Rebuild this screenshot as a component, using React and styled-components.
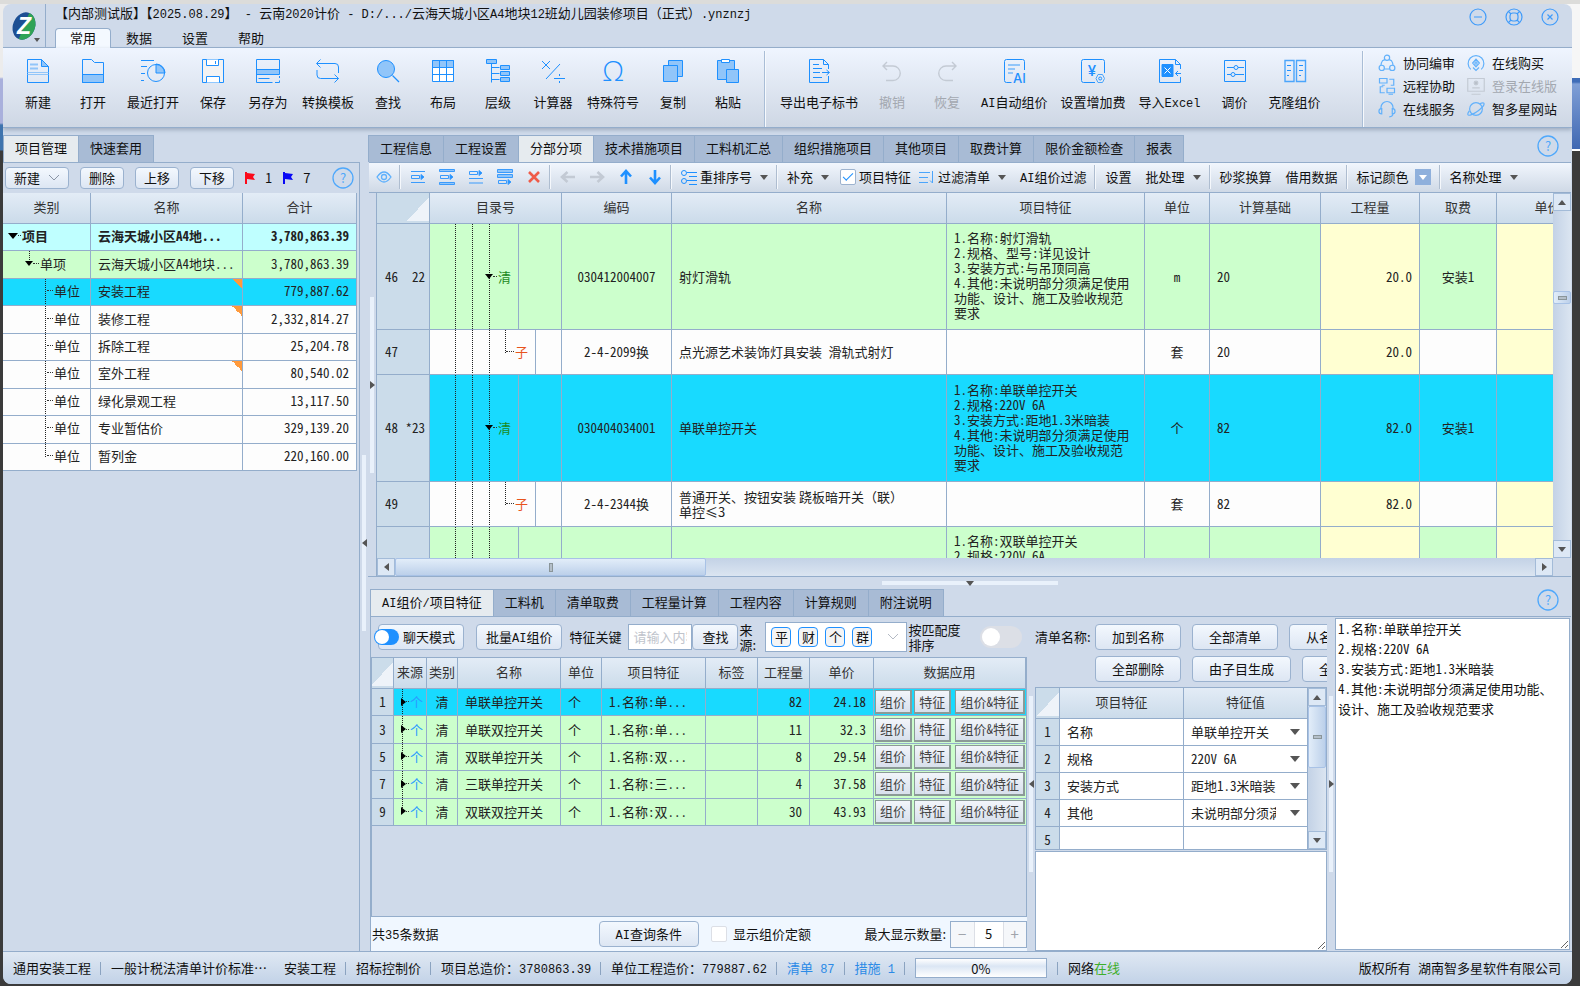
import { useState } from 'react';
import styled, { createGlobalStyle, css } from 'styled-components';

const line = '#94adcb';
const blue = '#1e90ff';
const pale = '#91c5f9';

const GlobalStyle = createGlobalStyle`
  *, *::before, *::after {
    box-sizing: border-box;
  }
  body {
    margin: 0;
    font-family: 'Noto Sans CJK SC', sans-serif;
    font-size: 13px;
    line-height: 20px;
    color: #111;
  }
  button, input, select, textarea {
    font: inherit;
    color: inherit;
    margin: 0;
  }
  button {
    cursor: pointer;
  }
  svg {
    flex: none;
    overflow: visible;
  }
`;

const Latin = styled.span`
  font-family: 'Liberation Mono', monospace;
  font-size: 12px;
  line-height: 1;
  white-space: pre;
`;

const mixed = (text) =>
  text.split(/([\x20-\x7e]+)/).map((part, i) => (i % 2 ? <Latin key={i}>{part}</Latin> : part));

const Desktop = styled.div`
  height: 100vh;
  padding: 4px 8px 2px 3px;
  background:
    linear-gradient(#dcdcda, #dcdcda) 0 0 / 100% 4px no-repeat,
    linear-gradient(#f6f6f6 0 78px, #3f6db8 78px 82px, #7f9fd6 84px, #4068b2 149px, #fff 149px 151px, #3b3b3b 151px) 100% 0 / 20px 100% no-repeat,
    linear-gradient(#ececec 0 77px, #a9b0dc 79px 123px, #3f74ae 125px 150px, #3b3b3b 151px);
`;

const Window = styled.div`
  display: flex;
  flex-direction: column;
  height: 100%;
  overflow: hidden;
  background: #cfdaea;
  border-radius: 8px;
`;

/* title bar */

const TitleBar = styled.header`
  display: flex;
  flex: none;
  height: 44px;
  border-bottom: 1px solid ${line};
`;

const LogoButton = styled.button`
  display: flex;
  align-items: flex-end;
  width: 43px;
  padding: 0 0 4px 8px;
  background: none;
  border: 0;
  border-right: 1px solid ${line};
`;

const TitleColumn = styled.div`
  display: flex;
  flex: 1;
  flex-direction: column;
  justify-content: space-between;
  padding-left: 9px;
`;

const Title = styled.h1`
  margin: 0;
  font-size: 13px;
  font-weight: 400;
  line-height: 18px;
  white-space: pre;
`;

const Menu = styled.nav`
  display: flex;
  margin-bottom: -1px;
`;

const MenuTab = styled.button`
  height: 20px;
  width: 56px;
  padding: 0;
  line-height: 16px;
  border: 1px solid transparent;
  border-bottom: 0;
  border-radius: 4px 4px 0 0;
  background: none;
  padding-bottom: 2px;
  ${({ $active }) =>
    $active &&
    css`
      background: #f4f9ff;
      border-color: ${line};
    `}
`;

const WindowButtons = styled.div`
  display: flex;
  gap: 18px;
  padding: 3px 13px 0 0;
`;

const RoundButton = styled.button`
  display: flex;
  height: 20px;
  width: 18px;
  padding: 0;
  align-items: center;
  background: none;
  border: 0;
`;

/* ribbon */

const Ribbon = styled.div`
  display: flex;
  flex: none;
  height: 80px;
  padding-left: 8px;
  background: linear-gradient(#eff5ff, #e2e9f4 40%, #ced7e4);
  border-bottom: 1px solid ${line};
  box-shadow: 0 2px 4px #9fadc0;
`;

const RibbonButton = styled.button`
  display: flex;
  flex-direction: column;
  align-items: center;
  gap: 9px;
  min-width: 54px;
  margin-right: 1px;
  padding: 11px 6px 0;
  background: none;
  border: 0;
  white-space: nowrap;
  &:disabled {
    color: #a3a8b0;
  }
`;

const RibbonLine = styled.span`
  width: 2px;
  margin: 3px 8px 0;
  background: linear-gradient(90deg, #a9bdd6 50%, #f6f9fd 50%);
`;

const Spacer = styled.span`
  flex: ${({ $grow }) => $grow || 1};
`;

const Links = styled.div`
  display: grid;
  grid-template-columns: auto auto;
  grid-auto-rows: 23px;
  column-gap: 12px;
  padding: 3px 15px 0 6px;
`;

const SideLink = styled.a`
  display: flex;
  align-items: center;
  gap: 7px;
  color: ${({ $off }) => ($off ? '#a3a8b0' : '#111')};
  text-decoration: none;
  white-space: nowrap;
`;

/* panes */

const Body = styled.div`
  display: flex;
  flex: 1;
  min-height: 0;
  padding-top: 7px;
`;

const Sidebar = styled.aside`
  display: flex;
  flex-direction: column;
  flex: none;
  width: 357px;
`;

const SidePanel = styled.div`
  flex: 1;
  padding-right: 2px;
  border: 1px solid ${line};
  border-left: 0;
  border-bottom: 0;
`;

const TabRow = styled.div`
  display: flex;
  flex: none;
  height: 27px;
  padding-right: ${({ $inset }) => ($inset ? 12 : 0)}px;
`;

const Tab = styled.button`
  padding: 0 11px 2px;
  border: 1px solid ${line};
  border-width: 1px 1px 0 0;
  background: ${({ $active }) => ($active ? '#e6ebef' : '#a8bbd5')};
  white-space: nowrap;
  &:first-child {
    border-left-width: 1px;
  }
`;

const HelpButton = styled(RoundButton)`
  width: 22px;
  height: 22px;
  margin-left: auto;
`;

const SideTools = styled.div`
  display: flex;
  align-items: center;
  height: 30px;
  padding: 0 3px 0 2px;
  gap: 11px;
`;

const PushButton = styled.button`
  display: inline-flex;
  align-items: center;
  justify-content: center;
  gap: 8px;
  flex: none;
  height: ${({ $tall }) => ($tall ? 26 : 22)}px;
  padding: 0 ${({ $pad }) => $pad || 8}px;
  line-height: 18px;
  background: linear-gradient(#f3f8fe, #dde6f3);
  border: 1px solid #9bb2cf;
  border-radius: 4px;
  white-space: nowrap;
`;

const Flag = styled.span`
  display: flex;
  align-items: center;
  gap: 10px;
`;

const Splitter = styled.div`
  display: flex;
  flex: none;
  align-items: center;
  justify-content: center;
  ${({ $row }) => ($row ? 'height: 12px;' : 'width: 8px;')}
`;

const SplitterBar = styled.span`
  display: flex;
  align-items: center;
  justify-content: center;
  background: #e9f1fb;
  ${({ $row }) => ($row ? 'width: 176px; height: 4px;' : 'width: 4px; height: 176px;')}
`;

const Arrow = styled.span`
  flex: none;
  width: 0;
  height: 0;
  border: ${({ $size }) => $size || 4}px solid transparent;
  ${({ $dir, $size, $color }) => {
    const size = ($size || 4) + 1;
    const fill = $color || '#555';
    return {
      up: `border-top: 0; border-bottom: ${size}px solid ${fill};`,
      down: `border-bottom: 0; border-top: ${size}px solid ${fill};`,
      left: `border-left: 0; border-right: ${size}px solid ${fill};`,
      right: `border-right: 0; border-left: ${size}px solid ${fill};`,
    }[$dir || 'down'];
  }}
`;

const Main = styled.main`
  display: flex;
  flex: 1;
  flex-direction: column;
  min-width: 0;
  padding-right: 1px;
`;

/* grids */

const DataTable = styled.table`
  table-layout: fixed;
  width: ${({ $width }) => ($width ? `${$width}px` : '100%')};
  border-collapse: separate;
  border-spacing: 0;
  font-feature-settings: 'hwid';
  color: #222;
`;

const Th = styled.th`
  height: ${({ $height }) => $height || 31}px;
  padding: 0 0 2px;
  font-weight: 400;
  color: #333;
  background: linear-gradient(#e3ecf6, #cbdbea);
  border-right: 1px solid ${line};
  border-bottom: 1px solid ${line};
  white-space: nowrap;
  overflow: hidden;
`;

const Corner = styled(Th)`
  background: linear-gradient(to bottom right, transparent 50%, #eef3f9 50%) 100% 4px / 22px 24px no-repeat, #cbdcea;
`;

const Td = styled.td`
  height: ${({ $height }) => ($height ? `${$height}px` : 'auto')};
  padding: 0 ${({ $pad }) => $pad ?? 7}px 1px;
  text-align: ${({ $align }) => $align || 'left'};
  line-height: 15px;
  background-color: ${({ $bg }) => $bg || 'transparent'};
  border-right: 1px solid ${line};
  border-bottom: 1px solid ${line};
  overflow: hidden;
  white-space: ${({ $wrap }) => ($wrap ? 'pre-line' : 'nowrap')};
`;

const SpecTd = styled(Td)`
  padding-right: 12px;
  padding-bottom: 3px;
`;

const QuotaNameTd = styled(Td)`
  font-feature-settings: ${({ $full }) => ($full ? 'normal' : 'inherit')};
`;

const RowHead = styled(Td)`
  background-color: #cbdcea;
`;

const RowNumbers = styled.div`
  display: flex;
  justify-content: space-between;
  padding-left: 4px;
`;

const ProjectTable = styled(DataTable)`
  height: 278px;
  td {
    padding-bottom: 3px;
  }
  tbody tr:first-child {
    font-weight: 700;
  }
`;

const NameTd = styled(Td)`
  ${({ $marked }) =>
    $marked &&
    css`
      background-image: linear-gradient(to bottom left, #ff9a3c 50%, transparent 50%);
      background-size: 10px 10px;
      background-position: 100% 0;
      background-repeat: no-repeat;
    `}
`;

const dots = 'repeating-linear-gradient(#222 0 1px, transparent 1px 2px)';

const TreeTd = styled(Td)`
  background-repeat: no-repeat;
  background-image: ${({ $guides }) => $guides.map(() => dots).join(', ') || 'none'};
  background-position: ${({ $guides }) => $guides.map((g) => `${g.x}px 0`).join(', ') || '0 0'};
  background-size: ${({ $guides }) => $guides.map((g) => `1px ${g.h || '100%'}`).join(', ') || 'auto'};
`;

const TreeItem = styled.span`
  display: flex;
  align-items: center;
  padding-left: ${({ $indent }) => $indent}px;
  color: ${({ $color }) => $color || 'inherit'};
`;

const Dash = styled.i`
  width: ${({ $width }) => $width || 6}px;
  margin-right: 1px;
  border-top: 1px dotted #333;
`;

const InnerLine = styled.span`
  position: absolute;
  top: 0;
  bottom: 0;
  left: ${({ $left }) => $left}px;
  border-left: 1px solid ${line};
`;

const DirTd = styled(TreeTd)`
  position: relative;
`;

/* quota grid */

const Toolbar = styled.div`
  display: flex;
  flex: none;
  align-items: center;
  height: 31px;
  margin-left: 1px;
  padding-bottom: 1px;
  background: linear-gradient(#f1f6fd, #cfd9e6);
  border-top: 1px solid ${line};
  border-bottom: 1px solid ${line};
`;

const IconButton = styled.button`
  display: flex;
  align-items: center;
  justify-content: center;
  width: 29px;
  height: 28px;
  padding: 0;
  background: none;
  border: 0;
`;

const ToolButton = styled.button`
  display: flex;
  align-items: center;
  padding: 0 7px;
  background: none;
  border: 0;
  white-space: nowrap;
  svg {
    margin-right: 3px;
  }
`;

const Caret = styled(Arrow)`
  margin-left: 8px;
`;

const ToolCheck = styled.label`
  display: flex;
  align-items: center;
  gap: 3px;
  padding: 0 1px 0 4px;
  white-space: nowrap;
`;

const CheckBox = styled.input`
  appearance: none;
  width: 16px;
  height: 16px;
  background: #fff;
  border: 1px solid ${({ $soft }) => ($soft ? '#dcdfe6' : '#9db3cf')};
  border-radius: 2px;
  &:checked::after {
    content: '';
    display: block;
    width: 10px;
    height: 5px;
    margin: 3px 0 0 2px;
    border: solid ${blue};
    border-width: 0 0 1px 1px;
    transform: rotate(-45deg);
  }
`;

const ToolLine = styled.span`
  width: 2px;
  height: 24px;
  margin: 0 2px 0 1px;
  background: linear-gradient(90deg, #aebdd0 50%, #f5f8fc 50%);
`;

const ColorSwatch = styled.span`
  display: flex;
  align-items: center;
  justify-content: center;
  width: 16px;
  height: 16px;
  margin-left: 6px;
  background: #8fb0dc;
`;

const GridFrame = styled.div`
  display: flex;
  flex: 1;
  min-height: 0;
  border-bottom: 1px solid ${line};
`;

const GridColumn = styled.div`
  display: flex;
  flex: 1;
  flex-direction: column;
  min-width: 0;
  border-left: 1px solid ${line};
`;

const GridClip = styled.div`
  flex: 1;
  min-height: 0;
  overflow: hidden;
`;

const HTrack = styled.div`
  display: flex;
  flex: none;
  height: 18px;
  background: linear-gradient(#c3d2e6, #dbe5f1);
`;

const VTrack = styled.div`
  display: flex;
  flex: none;
  flex-direction: column;
  width: 18px;
  margin-bottom: ${({ $corner }) => ($corner ? 18 : 0)}px;
  background: linear-gradient(90deg, #c3d2e6, #dbe5f1);
`;

const ScrollButton = styled.button`
  display: flex;
  align-items: center;
  justify-content: center;
  flex: none;
  width: 18px;
  height: 18px;
  padding: 0;
  background: #dde8f5;
  border: 1px solid #a3bbd8;
`;

const Thumb = styled.div`
  display: flex;
  flex: none;
  align-items: center;
  justify-content: center;
  flex-basis: ${({ $length }) => $length}px;
  margin-top: ${({ $offset }) => $offset || 0}px;
  background: linear-gradient(${({ $flat }) => ($flat ? '' : '90deg, ')}#e2edf9, #bcd0ea);
  border: 1px solid #a8c2e6;
  border-radius: 2px;
`;

const Grip = styled.span`
  ${({ $tall }) => ($tall ? 'width: 4px; height: 9px;' : 'width: 9px; height: 4px;')}
  background: #b4bfc9;
  border: 1px solid #8a9599;
`;

/* lower pane */

const Lower = styled.section`
  display: flex;
  flex-direction: column;
  flex: none;
  height: 362px;
  padding-left: 2px;
`;

const LowerBody = styled.div`
  display: flex;
  flex: 1;
  min-height: 0;
  border: 1px solid ${line};
  border-width: 1px 0 0 1px;
`;

const AiPanel = styled.div`
  display: flex;
  flex: 1;
  flex-direction: column;
  min-width: 0;
`;

const AiTools = styled.div`
  display: flex;
  align-items: center;
  flex: none;
  height: 40px;
  padding: 0 5px 1px 7px;
  line-height: 15px;
`;

const SwitchButton = styled.label`
  display: flex;
  flex: none;
  align-items: center;
  gap: 4px;
  width: 86px;
  height: 26px;
  margin-right: 12px;
  background: linear-gradient(#f3f8fe, #dde6f3);
  border: 1px solid #9bb2cf;
  border-radius: 4px;
  white-space: nowrap;
`;

const Switch = styled.input`
  appearance: none;
  flex: none;
  display: flex;
  width: ${({ $large }) => ($large ? 42 : 25)}px;
  height: ${({ $large }) => ($large ? 22 : 16)}px;
  margin-left: ${({ $large }) => ($large ? 0 : -5)}px;
  background: ${({ $large }) => ($large ? '#dcdfe6' : blue)};
  border-radius: 11px;
  &::before {
    content: '';
    width: ${({ $large }) => ($large ? 18 : 14)}px;
    height: ${({ $large }) => ($large ? 18 : 14)}px;
    margin: ${({ $large }) => ($large ? 2 : 1)}px;
    background: #fff;
    border-radius: 50%;
  }
`;

const FieldLabel = styled.label`
  flex: none;
  width: ${({ $width }) => $width}px;
  margin-left: ${({ $gap }) => $gap || 0}px;
  white-space: ${({ $wrap }) => ($wrap ? 'normal' : 'nowrap')};
`;

const KeyInput = styled.input`
  flex: none;
  width: 64px;
  height: 26px;
  padding: 0 4px;
  background: #fff;
  border: 1px solid ${line};
  &::placeholder {
    color: #c0c4cc;
  }
`;

const SourcePicker = styled.button`
  display: flex;
  flex: none;
  align-items: center;
  gap: 7px;
  width: 142px;
  height: 30px;
  padding: 0 5px;
  background: #fff;
  border: 1px solid ${line};
  svg {
    margin: 0 2px 0 auto;
  }
`;

const SourceTag = styled.span`
  width: 20px;
  height: 20px;
  line-height: 17px;
  background: #f4f4f5;
  border: 1px solid ${blue};
  border-radius: 4px;
`;

const AiGrid = styled.div`
  flex: 1;
  min-height: 0;
  border: 1px solid ${line};
`;

const AiTable = styled(DataTable)`
  height: 168px;
`;

const ActionTd = styled(Td)`
  padding: 0 1px;
  border-right: 0;
`;

const Actions = styled.div`
  display: flex;
  gap: 2px;
`;

const CellButton = styled.button`
  flex: 1 1 auto;
  height: 24px;
  padding: 0 4px;
  line-height: 18px;
  color: #444;
  background: linear-gradient(#f2f5fa, #d8e0ec);
  border: 1px solid #8b9a97;
  border-bottom-width: 2px;
  border-right-width: 2px;
  &:last-child {
    margin-left: 2px;
  }
`;

const AiFooter = styled.div`
  display: flex;
  flex: none;
  align-items: center;
  height: 34px;
  padding-left: 1px;
  background: #f0f7ff;
`;

const FootCheck = styled.label`
  display: flex;
  align-items: center;
  gap: 6px;
  margin-left: 12px;
`;

const Stepper = styled.div`
  display: flex;
  width: 77px;
  height: 27px;
  margin-left: 4px;
  background: #fff;
  border: 1px solid ${line};
`;

const StepButton = styled.button`
  width: 23px;
  padding: 0;
  color: #a0a4ab;
  font-size: 15px;
  background: #f5f7fa;
  border: 0;
`;

const StepInput = styled.input`
  flex: 1;
  width: 30px;
  padding: 0;
  text-align: center;
  background: #fff;
  border: solid #dcdfe6;
  border-width: 0 1px;
`;

const FeaturePanel = styled.div`
  display: flex;
  flex: none;
  flex-direction: column;
  width: 292px;
  overflow: hidden;
`;

const ButtonGrid = styled.div`
  display: flex;
  flex: none;
  align-items: center;
  gap: 11px;
  height: 32px;
  margin-top: ${({ $first }) => ($first ? 4 : 0)}px;
  padding-left: ${({ $first }) => ($first ? 0 : 60)}px;
`;

const GroupLabel = styled.span`
  flex: none;
  width: 49px;
  white-space: nowrap;
`;

const FeatureFrame = styled.div`
  display: flex;
  flex: none;
  height: 163px;
  margin-top: 2px;
  overflow: hidden;
  background: #fff;
  border: 1px solid ${line};
`;

const SelectBox = styled.span`
  display: flex;
  align-items: center;
  padding: 0 7px;
`;

const ValueSelect = styled.select`
  appearance: none;
  flex: 1;
  min-width: 0;
  padding: 0;
  margin-right: 14px;
  background: none;
  border: 0;
  font-feature-settings: 'hwid';
`;

const Note = styled.textarea`
  display: block;
  flex: 1;
  min-height: 0;
  margin-top: 1px;
  padding: 0 12px 0 2px;
  line-height: 20px;
  background: #fff;
  border: 1px solid ${line};
  font-feature-settings: 'hwid';
`;

const NoteColumn = styled.div`
  display: flex;
  flex: none;
  width: 235px;
  margin: 0 1px 1px 0;
`;

/* status bar */

const StatusBar = styled.footer`
  display: flex;
  flex: none;
  align-items: center;
  height: 33px;
  padding: 0 11px 0 10px;
  background: linear-gradient(#dfe8f3, #c2d2e7);
  border-top: 1px solid ${line};
  white-space: pre;
`;

const Stat = styled.span`
  padding-right: ${({ $end }) => ($end ? 17 : 9)}px;
  color: ${({ $link }) => ($link ? '#2b8ae6' : 'inherit')};
`;

const StatLine = styled.i`
  width: 1px;
  height: 13px;
  margin-right: 10px;
  background: #8ba3c0;
`;

const Progress = styled.div`
  width: 132px;
  height: 20px;
  margin-right: 10px;
  text-align: center;
  line-height: 20px;
  background: linear-gradient(#fff, #dbe6f4 40%, #fff);
  border: 1px solid ${line};
`;

const Online = styled.span`
  color: #3fae2a;
`;

/* icons */

const Svg = ({ size = 24, stroke = blue, children, ...rest }) => (
  <svg width={size} height={size} viewBox="0 0 24 24" fill="none" stroke={stroke} aria-hidden="true" {...rest}>
    {children}
  </svg>
);

const icons = {
  new: (
    <>
      <path d="M1.5.5h14l7 7v16h-21z" />
      <path d="M15.5.5v7h7z" fill={pale} />
      <path d="M4 5.500h8M4 9.500h8" stroke={pale} strokeWidth="2" />
      <path d="M1.500 13.500h21M1.500 15.500h21" stroke={pale} />
    </>
  ),
  open: (
    <>
      <path d="M1.500 15.500h21v8h-21z" fill={pale} />
      <path d="M1.500 23.500V.5h9l3 3h9v20z" />
    </>
  ),
  recent: (
    <>
      <path d="M0 1.500h13M0 7.500h6M0 14.500h4M0 21.500h3" />
      <path d="M15 14V5a9 9 0 0 1 9 9z" fill={pale} />
      <circle cx="15" cy="14" r="8.500" />
    </>
  ),
  save: (
    <>
      <path d="M1.500.5h21v23h-21z" fill="#f3f3f3" />
      <path d="M5.500.5v6h12v-6M5.500 23.500v-6h13v6" fill="#fff" />
      <path d="M14.500 2v3" />
    </>
  ),
  saveAs: (
    <>
      <path d="M.5 11h23v4.500h-23z" fill={pale} stroke="none" />
      <path d="M.5 23.500V.5h23v15H.5M.5 10.500h23M2.500 19.500h11M.5 23.500h16M23.500 17v2M19 23.500h4.500v-2" />
    </>
  ),
  swap: (
    <>
      <path d="M1 4.500h18q3.500 0 3.500 3.500v6" />
      <path d="M4.500.5l-4 4 4 4M1 11v5q0 3.500 3.500 3.500h18M18.500 15.500l4 4-4 4" />
    </>
  ),
  search: (
    <>
      <circle cx="10" cy="10" r="8.500" fill={pale} />
      <path d="M16.500 16.500l6.500 6.500" strokeWidth="1.300" />
    </>
  ),
  grid: (
    <>
      <path d="M1.500 1.500h21v21h-21z" fill="#fff" />
      <path d="M1.500 1.500h21v7h-21z" fill={pale} />
      <path d="M1.500 15.500h21M8.500 1.500v21M15.500 1.500v21" />
    </>
  ),
  levels: (
    <>
      <path d="M5.500 4v19.500M5.500 8.500h8M5.500 14.500h8M5.500 20.500h8" />
      <path d="M.5.5h10v4H.5zM14.500 6.500h9v4h-9zM14.500 12.500h9v4h-9zM14.500 18.500h9v4h-9z" fill={pale} />
    </>
  ),
  calc: <path d="M1 2l8 8M9 2l-8 8M5 20L19 5M13 19.500h11M18.500 15v2M18.500 22v2" />,
  omega: (
    <text x="12" y="22" textAnchor="middle" fontSize="28" fontWeight="300" fill={blue} stroke="none" fontFamily="Open Sans, sans-serif">
      Ω
    </text>
  ),
  copy: (
    <>
      <path d="M7.500 1.500h14v16h-14z" fill={pale} />
      <path d="M2.500 6.500h14v16h-14z" fill={pale} />
    </>
  ),
  paste: (
    <>
      <path d="M1.500 1.500h17v19h-17z" fill={pale} />
      <path d="M5.500.5h8v3h-8z" fill="#fff" />
      <path d="M10.500 10.500h12v13h-12z" fill={pale} />
    </>
  ),
  export: (
    <>
      <path d="M21.500 10V5.500l-5-5H2.500v23h19V17M16.500.5v5h5" />
      <path d="M6 5.500h6M6 9.500h9M6 13.500h7M6 18.500h9M15 13.500h7M19.500 11l3 2.500-3 2.500" />
    </>
  ),
  undo: <path d="M7 3L3 7l4 4M3 7h10a7.200 7.200 0 0 1 0 14.500H6" strokeWidth="1.400" />,
  redo: <path d="M17 3l4 4-4 4M21 7H11a7.200 7.200 0 0 0 0 14.500h7" strokeWidth="1.400" />,
  ai: (
    <>
      <path d="M22.500 11V2.500a2 2 0 0 0-2-2h-16a2 2 0 0 0-2 2v19a2 2 0 0 0 2 2h5" />
      <path d="M6 6h12M6 10h7M6 14h5" stroke={pale} strokeWidth="2" />
      <text x="11" y="24" fontSize="13" fontWeight="500" fill={blue} stroke="none" fontFamily="Inter, sans-serif">
        AI
      </text>
    </>
  ),
  fee: (
    <>
      <path d="M23.500 14V2.500a2 2 0 0 0-2-2h-19a2 2 0 0 0-2 2v19a2 2 0 0 0 2 2H14" />
      <text x="11" y="17" textAnchor="middle" fontSize="15" fontWeight="500" fill={blue} stroke="none" fontFamily="Inter, sans-serif">
        ¥
      </text>
      <path d="M17 15.500h4.500l2 4-2 4H17l-2-4z" stroke="#4ba5fb" />
      <circle cx="19.200" cy="19.500" r="1.500" />
    </>
  ),
  excel: (
    <>
      <path d="M22.500 10V5.500l-5-5H1.500v23h21V18M17.500.5v5h5" />
      <path d="M4 5.500h11v12H4z" fill={blue} />
      <path d="M6.500 8.500l6 6M12.500 8.500l-6 6" stroke="#fff" />
      <path d="M17.500 14.500h5.500M20 12l-2.500 2.500L20 17" />
    </>
  ),
  adjust: (
    <>
      <path d="M1.500 1.500h21v21h-21z" />
      <path d="M4 8.500h7M15 8.500h6M4 15.500h4M12 15.500h9" />
      <circle cx="13" cy="8.500" r="2" />
      <circle cx="10" cy="15.500" r="2" />
    </>
  ),
  clone: (
    <>
      <path d="M2 1.500h9v21H2zM13.500 1.500h9v21h-9z" stroke="#4ba5fb" strokeWidth="1.400" />
      <path d="M4 6.500h4M4 11.500h4M4 16.500h2M16 6.500h4M16 11.500h4M16 16.500h2" />
    </>
  ),
  team: (
    <>
      <path d="M9 7.500L6 9q-2 3-2 6M15 7.500l3 1.500q2 3 2 6M9 20h6" />
      <circle cx="12" cy="5" r="3.500" />
      <circle cx="5" cy="18.500" r="3.500" />
      <circle cx="19" cy="18.500" r="3.500" />
    </>
  ),
  remote: (
    <>
      <path d="M2 2h10v6H2zM12 15h10v6H12zM5 11h4M14 23h6" />
      <path d="M15 3h6v8h-4M9 21H3v-8h4" />
    </>
  ),
  service: (
    <>
      <path d="M4 12V10a8 8 0 0 1 16 0v2" />
      <path d="M5 11.500c-5 0-5 7 0 7zM19 11.500c5 0 5 7 0 7zM20 18q0 4-5 4.500" />
    </>
  ),
  buy: (
    <>
      <path d="M5 20.500a10.500 10.500 0 1 1 14 0M12 7l4.500 5-4.500 5-4.500-5zM8 18l4 4 4-4" />
      <circle cx="12" cy="12" r="1.500" />
    </>
  ),
  login: (
    <>
      <path d="M1 2h22v17H1zM6 23h12M7 14.500h10" />
      <circle cx="12" cy="8" r="2.500" fill="#b9c0ca" />
    </>
  ),
  planet: (
    <>
      <circle cx="12" cy="12" r="8.500" />
      <path d="M17 5c5-2.500 7-1 5 2.500S12 17 6 19.500s-6-1-3-5" />
    </>
  ),
};

const Chevron = ({ color = '#8a95a5' }) => (
  <svg width="12" height="8" fill="none" stroke={color} aria-hidden="true">
    <path d="M1 1l5 5 5-5" />
  </svg>
);

const Help = () => (
  <HelpButton aria-label="帮助">
    <svg width="22" height="22" fill="none" stroke="#4fa8fb">
      <circle cx="11" cy="11" r="10" strokeWidth="1.300" />
      <text x="11" y="16" textAnchor="middle" fontSize="13" fill="#4fa8fb" stroke="none">
        ?
      </text>
    </svg>
  </HelpButton>
);

const Logo = () => (
  <svg width="32" height="32" viewBox="0 0 32 32" aria-hidden="true">
    <g transform="rotate(22 13 15)">
      <ellipse cx="13" cy="15" rx="11" ry="14" fill="#1d4f93" />
      <path d="M13 1a11 14 0 0 1 0 28z" fill="#2fa356" />
    </g>
    <text x="13" y="23" textAnchor="middle" fontSize="23" fontWeight="700" fontStyle="italic" fill="#fff" fontFamily="Liberation Sans, sans-serif">
      Z
    </text>
    <path d="M23 27h6l-3 4z" fill="#555" />
  </svg>
);

const RowIcon = ({ kind }) => (
  <svg width="16" height="16" fill="none" stroke="#3a9bfc" aria-hidden="true">
    {kind === 0 && (
      <>
        <path d="M1 2.500h14M1 13.500h14" />
        <path d="M1.500 6.500h8v3h-8z" />
        <path d="M11 5.500l3 2.500-3 2.500z" fill={blue} />
      </>
    )}
    {kind === 1 && (
      <>
        <path d="M.5.500h15v2H.5zM.5 13.500h15v2H.5z" fill={pale} />
        <path d="M1.500 6.500h8v3h-8z" />
        <path d="M11 5.500l3 2.500-3 2.500z" fill={blue} />
      </>
    )}
    {kind === 2 && (
      <>
        <path d="M1 9.500h14M1 14h14M1.500 2.500h8v3h-8z" />
        <path d="M11 1.500l3 2.500-3 2.500z" fill={blue} />
      </>
    )}
    {kind === 3 && (
      <>
        <path d="M.5.500h15v3H.5zM.5 5.500h15v3H.5z" fill={pale} />
        <path d="M1.500 11.500h8v3h-8z" />
        <path d="M11 10.500l3 2.500-3 2.500z" fill={blue} />
      </>
    )}
  </svg>
);

const MoveIcon = ({ angle, color }) => (
  <svg width="16" height="16" fill="none" stroke={color} strokeWidth="2.600" aria-hidden="true">
    <path transform={`rotate(${angle} 8 8)`} d="M8 15V3M3 7.500L8 2l5 5.500" />
  </svg>
);

/* data */

const ribbonMain = [
  ['新建', 'new'],
  ['打开', 'open'],
  ['最近打开', 'recent'],
  ['保存', 'save'],
  ['另存为', 'saveAs'],
  ['转换模板', 'swap'],
  ['查找', 'search'],
  ['布局', 'grid'],
  ['层级', 'levels'],
  ['计算器', 'calc'],
  ['特殊符号', 'omega'],
  ['复制', 'copy'],
  ['粘贴', 'paste'],
];

const ribbonMore = [
  ['导出电子标书', 'export'],
  ['撤销', 'undo', true],
  ['恢复', 'redo', true],
  ['AI自动组价', 'ai'],
  ['设置增加费', 'fee'],
  ['导入Excel', 'excel'],
  ['调价', 'adjust'],
  ['克隆组价', 'clone'],
];

const links = [
  ['协同编审', 'team'],
  ['在线购买', 'buy'],
  ['远程协助', 'remote'],
  ['登录在线版', 'login', true],
  ['在线服务', 'service'],
  ['智多星网站', 'planet'],
];

const mainTabs = ['工程信息', '工程设置', '分部分项', '技术措施项目', '工料机汇总', '组织措施项目', '其他项目', '取费计算', '限价金额检查', '报表'];
const lowerTabs = ['AI组价/项目特征', '工料机', '清单取费', '工程量计算', '工程内容', '计算规则', '附注说明'];

const green = '#ccffcc';
const yellow = '#ffffd2';
const cyan = '#18daff';
const white = '#fdfdfd';

const projects = [
  ['项目', '云海天城小区A4地...', '3,780,863.39', '#bfffff'],
  ['单项', '云海天城小区A4地块...', '3,780,863.39', green],
  ['单位', '安装工程', '779,887.62', cyan, true],
  ['单位', '装修工程', '2,332,814.27', white, true],
  ['单位', '拆除工程', '25,204.78', white],
  ['单位', '室外工程', '80,540.02', white, true],
  ['单位', '绿化景观工程', '13,117.50', white],
  ['单位', '专业暂估价', '329,139.20', white],
  ['单位', '暂列金', '220,160.00', white],
];

const tail = '4.其他:未说明部分须满足使用功能、设计、施工及验收规范要求';

const quotas = [
  { no: '46', seq: '22', code: '030412004007', name: '射灯滑轨', spec: `1.名称:射灯滑轨\n2.规格、型号:详见设计\n3.安装方式:与吊顶同高\n${tail}`, unit: 'm', base: '20', qty: '20.0', fee: '安装1', bg: green, h: 106 },
  { no: '47', child: true, code: '2-4-2099换', name: '点光源艺术装饰灯具安装 滑轨式射灯', unit: '套', base: '20', qty: '20.0', bg: white, h: 45 },
  { no: '48', seq: '*23', code: '030404034001', name: '单联单控开关', spec: `1.名称:单联单控开关\n2.规格:220V 6A\n3.安装方式:距地1.3米暗装\n${tail}`, unit: '个', base: '82', qty: '82.0', fee: '安装1', bg: cyan, h: 107 },
  { no: '49', child: true, full: true, code: '2-4-2344换', name: '普通开关、按钮安装 跷板暗开关（联）\n单控≤3', unit: '套', base: '82', qty: '82.0', bg: white, h: 45 },
  { no: '', cut: true, spec: `1.名称:双联单控开关\n2.规格:220V 6A\n3.安装方式:距地1.3米暗装\n${tail}`, bg: green, h: 106 },
];

const matches = [
  ['1', '单联单控开关', '1.名称:单...', '82', '24.18'],
  ['3', '单联双控开关', '1.名称:单...', '11', '32.3'],
  ['5', '双联单控开关', '1.名称:双...', '8', '29.54'],
  ['7', '三联单控开关', '1.名称:三...', '4', '37.58'],
  ['9', '双联双控开关', '1.名称:双...', '30', '43.93'],
];

const features = [
  ['名称', '单联单控开关'],
  ['规格', '220V 6A'],
  ['安装方式', '距地1.3米暗装'],
  ['其他', '未说明部分须满足使用功能'],
  ['', ''],
];

const noteText = '1.名称:单联单控开关\n2.规格:220V 6A\n3.安装方式:距地1.3米暗装\n4.其他:未说明部分须满足使用功能、设计、施工及验收规范要求';

const Cols = ({ widths }) => (
  <colgroup>
    {widths.map((w, i) => (
      <col key={i} style={w ? { width: w } : undefined} />
    ))}
  </colgroup>
);

const Divider = ({ dir, row }) => (
  <Splitter $row={row}>
    <SplitterBar $row={row}>
      <Arrow $dir={dir} />
    </SplitterBar>
  </Splitter>
);

const RibbonItems = ({ items }) =>
  items.map(([label, icon, off]) => (
    <RibbonButton key={label} disabled={off}>
      <Svg stroke={off ? '#c3cad4' : blue}>{icons[icon]}</Svg>
      <span>{mixed(label)}</span>
    </RibbonButton>
  ));

const ProjectTree = () => (
  <ProjectTable>
    <Cols widths={[88, 152, null]} />
    <thead>
      <tr>
        <Th>类别</Th>
        <Th>名称</Th>
        <Th>合计</Th>
      </tr>
    </thead>
    <tbody>
      {projects.map(([kind, name, total, bg, marked], i) => {
        const last = i === projects.length - 1;
        const guides = i === 0 ? [] : i === 1 ? [{ x: 26, h: '10px' }] : [{ x: 42, h: last ? '50%' : '100%' }];
        return (
          <tr key={name}>
            <TreeTd $bg={bg} $pad={0} $guides={guides}>
              <TreeItem $indent={[5, 22][i] ?? 44}>
                {i < 2 && <Arrow $color="#000" $size={i ? 4 : 5} />}
                <Dash $width={i ? 6 : 3} />
                {kind}
              </TreeItem>
            </TreeTd>
            <NameTd $bg={bg} $marked={marked}>
              {name}
            </NameTd>
            <Td $bg={bg} $align="right">
              {total}
            </Td>
          </tr>
        );
      })}
    </tbody>
  </ProjectTable>
);

const QuotaGrid = () => (
  <DataTable $width={1222}>
    <Cols widths={[53, 132, 110, 275, 198, 65, 111, 99, 77, 102]} />
    <thead>
      <tr>
        <Corner aria-label="全选" />
        {['目录号', '编码', '名称', '项目特征', '单位', '计算基础', '工程量', '取费', '单价'].map((t) => (
          <Th key={t}>{t}</Th>
        ))}
      </tr>
    </thead>
    <tbody>
      {quotas.map((q, i) => {
        const sum = q.bg === cyan ? cyan : yellow;
        const guides = [{ x: 25 }, { x: 42 }, { x: 59 }];
        if (q.child) guides.push({ x: 75, h: '24px' });
        return (
          <tr key={i}>
            <RowHead $height={q.h} $pad={4}>
              <RowNumbers>
                <span>{q.no}</span>
                <span>{q.seq}</span>
              </RowNumbers>
            </RowHead>
            <DirTd $bg={q.bg} $pad={0} $guides={guides}>
              {!q.cut && (
                <TreeItem $indent={q.child ? 76 : 55} $color={q.child ? '#e8541c' : '#1d8a1d'}>
                  {!q.child && <Arrow $color="#000" />}
                  <Dash $width={q.child ? 8 : 4} />
                  {q.child ? '子' : '清'}
                </TreeItem>
              )}
              <InnerLine $left={q.child ? 105 : 88} />
            </DirTd>
            <Td $bg={q.bg} $align="center">{q.code}</Td>
            <QuotaNameTd $bg={q.bg} $full={q.full} $wrap>{q.name}</QuotaNameTd>
            <SpecTd $bg={q.bg} $wrap>{q.spec}</SpecTd>
            <Td $bg={q.bg} $align="center">{q.unit}</Td>
            <Td $bg={q.bg}>{q.base}</Td>
            <Td $bg={sum} $align="right">{q.qty}</Td>
            <Td $bg={q.bg} $align="center">{q.fee}</Td>
            <Td $bg={sum} />
          </tr>
        );
      })}
    </tbody>
  </DataTable>
);

const AiMatches = () => (
  <AiTable>
    <Cols widths={[22, 33, 31, 103, 41, 104, 52, 52, 64, null]} />
    <thead>
      <tr>
        <Corner aria-label="全选" />
        {['来源', '类别', '名称', '单位', '项目特征', '标签', '工程量', '单价', '数据应用'].map((t) => (
          <Th key={t}>{t}</Th>
        ))}
      </tr>
    </thead>
    <tbody>
      {matches.map(([no, name, spec, qty, price], i) => {
        const bg = i === 0 ? cyan : green;
        return (
          <tr key={no}>
            <RowHead $align="center" $pad={0}>{no}</RowHead>
            <TreeTd $bg={bg} $pad={0} $guides={i === 4 ? [{ x: 8, h: '50%' }] : [{ x: 8 }]}>
              <TreeItem $indent={7} $color="#2b9bff">
                <Arrow $dir="right" $color="#000" />
                <Dash $width={3} />个
              </TreeItem>
            </TreeTd>
            <Td $bg={bg} $align="center" $pad={0}>清</Td>
            <Td $bg={bg}>{name}</Td>
            <Td $bg={bg}>个</Td>
            <Td $bg={bg}>{spec}</Td>
            <Td $bg={bg} />
            <Td $bg={bg} $align="right">{qty}</Td>
            <Td $bg={bg} $align="right">{price}</Td>
            <ActionTd $bg={bg} $pad={1}>
              <Actions>
                <CellButton>组价</CellButton>
                <CellButton>特征</CellButton>
                <CellButton>组价&特征</CellButton>
              </Actions>
            </ActionTd>
          </tr>
        );
      })}
    </tbody>
  </AiTable>
);

const FeatureTable = () => (
  <FeatureFrame>
    <GridClip>
      <DataTable>
        <Cols widths={[24, 124, null]} />
        <thead>
          <tr>
            <Corner aria-label="全选" />
            <Th>项目特征</Th>
            <Th>特征值</Th>
          </tr>
        </thead>
        <tbody>
          {features.map(([key, value], i) => (
            <tr key={i}>
              <RowHead $height={27} $align="center" $pad={0}>{i + 1}</RowHead>
              <Td $bg="#fff">{key}</Td>
              <Td $bg="#fff" $pad={0}>
                {value && (
                  <SelectBox>
                    <ValueSelect aria-label={key}>
                      <option>{value}</option>
                    </ValueSelect>
                    <Arrow $size={5} />
                  </SelectBox>
                )}
              </Td>
            </tr>
          ))}
        </tbody>
      </DataTable>
    </GridClip>
    <VTrack>
      <ScrollButton aria-label="向上">
        <Arrow $dir="up" />
      </ScrollButton>
      <Thumb $length={62}>
        <Grip />
      </Thumb>
      <Spacer />
      <ScrollButton aria-label="向下">
        <Arrow />
      </ScrollButton>
    </VTrack>
  </FeatureFrame>
);

const App = () => {
  const [mainTab, setMainTab] = useState('分部分项');
  const [lowerTab, setLowerTab] = useState(lowerTabs[0]);
  const [limit, setLimit] = useState(5);

  return (
    <Desktop>
      <GlobalStyle />
      <Window>
        <TitleBar>
          <LogoButton aria-label="菜单">
            <Logo />
          </LogoButton>
          <TitleColumn>
            <Title>{mixed('【内部测试版】【2025.08.29】 - 云南2020计价 - D:/.../云海天城小区A4地块12班幼儿园装修项目（正式）.ynznzj')}</Title>
            <Menu>
              {['常用', '数据', '设置', '帮助'].map((t, i) => (
                <MenuTab key={t} $active={i === 0}>
                  {t}
                </MenuTab>
              ))}
            </Menu>
          </TitleColumn>
          <WindowButtons>
            <RoundButton aria-label="最小化">
              <svg width="18" height="18" fill="none" stroke="#3f9bfa" strokeWidth="1.200">
                <circle cx="9" cy="9" r="8" />
                <path d="M5 9h8" />
              </svg>
            </RoundButton>
            <RoundButton aria-label="最大化">
              <svg width="18" height="18" fill="none" stroke="#3f9bfa" strokeWidth="1.200">
                <circle cx="9" cy="9" r="8" />
                <rect x="5" y="5" width="8" height="8" rx="3" />
                <path d="M3.500 3.500L6 6M14.500 3.500L12 6M3.500 14.500L6 12M14.500 14.500L12 12" />
              </svg>
            </RoundButton>
            <RoundButton aria-label="关闭">
              <svg width="18" height="18" fill="none" stroke="#3f9bfa" strokeWidth="1.200">
                <circle cx="9" cy="9" r="8" />
                <path d="M6.500 6.500l5 5M11.500 6.500l-5 5" />
              </svg>
            </RoundButton>
          </WindowButtons>
        </TitleBar>

        <Ribbon>
          <RibbonItems items={ribbonMain} />
          <RibbonLine />
          <RibbonItems items={ribbonMore} />
          <Spacer />
          <RibbonLine />
          <Links>
            {links.map(([label, icon, off]) => (
              <SideLink key={label} href="#" $off={off}>
                <Svg size={18} stroke={off ? '#c3cad4' : '#62b1fb'} strokeWidth="1.600">
                  {icons[icon]}
                </Svg>
                {label}
              </SideLink>
            ))}
          </Links>
        </Ribbon>

        <Body>
          <Sidebar>
            <TabRow>
              <Tab $active>项目管理</Tab>
              <Tab>快速套用</Tab>
            </TabRow>
            <SidePanel>
              <SideTools>
                <PushButton>
                  新建
                  <Chevron />
                </PushButton>
                <PushButton>删除</PushButton>
                <PushButton>上移</PushButton>
                <PushButton>下移</PushButton>
                <Flag>
                  <svg width="10" height="12" aria-hidden="true">
                    <path d="M0 0h2v12H0zM2 1l8 1-2 3 2 3-8-1z" fill="#fb0a1b" />
                  </svg>
                  1
                </Flag>
                <Flag>
                  <svg width="10" height="12" aria-hidden="true">
                    <path d="M0 0h2v12H0zM2 1l8 1-2 3 2 3-8-1z" fill="#0808f5" />
                  </svg>
                  7
                </Flag>
                <Help />
              </SideTools>
              <ProjectTree />
            </SidePanel>
          </Sidebar>

          <Divider dir="left" />

          <Main>
            <TabRow $inset>
              {mainTabs.map((t) => (
                <Tab key={t} $active={t === mainTab} onClick={() => setMainTab(t)}>
                  {t}
                </Tab>
              ))}
              <Help />
            </TabRow>
            <Toolbar>
              <IconButton aria-label="显示">
                <svg width="16" height="12" fill="none" stroke="#5eb0fc" strokeWidth="1.300">
                  <path d="M1 6q7-10 14 0q-7 10-14 0z" />
                  <circle cx="8" cy="6" r="2.500" />
                </svg>
              </IconButton>
              <ToolLine />
              {['插入清单', '插入标题', '插入子目', '追加'].map((t, i) => (
                <IconButton key={t} aria-label={t}>
                  <RowIcon kind={i} />
                </IconButton>
              ))}
              <IconButton aria-label="删除行">
                <svg width="14" height="14" stroke="#ef5b48" strokeWidth="2.600">
                  <path d="M2 2l10 10M12 2L2 12" />
                </svg>
              </IconButton>
              <ToolLine />
              {[['升级', -90, '#c3cad4'], ['降级', 90, '#c3cad4'], ['上移行', 0, blue], ['下移行', 180, blue]].map(([t, angle, color]) => (
                <IconButton key={t} aria-label={t}>
                  <MoveIcon angle={angle} color={color} />
                </IconButton>
              ))}
              <ToolLine />
              <ToolButton>
                <svg width="16" height="15" fill="none" stroke={blue}>
                  <circle cx="3" cy="3" r="2.500" />
                  <circle cx="3" cy="11" r="2.500" />
                  <path d="M6 2.500h10M8 6.500h8M6 10.500h10M8 14.500h8" />
                </svg>
                重排序号
                <Caret />
              </ToolButton>
              <ToolLine />
              <ToolButton>
                补充
                <Caret />
              </ToolButton>
              <ToolCheck>
                <CheckBox type="checkbox" defaultChecked />
                项目特征
              </ToolCheck>
              <ToolButton>
                <svg width="16" height="15" fill="none" stroke="#4ba5fb">
                  <path d="M0 2.500h11M0 7.500h9M0 12.500h9M13.500 1v12l-2.500-2.500" />
                </svg>
                过滤清单
                <Caret />
              </ToolButton>
              <ToolButton>
                <span>{mixed('AI组价过滤')}</span>
              </ToolButton>
              <ToolLine />
              <ToolButton>设置</ToolButton>
              <ToolButton>
                批处理
                <Caret />
              </ToolButton>
              <ToolLine />
              <ToolButton>砂浆换算</ToolButton>
              <ToolButton>借用数据</ToolButton>
              <ToolLine />
              <ToolButton>
                标记颜色
                <ColorSwatch>
                  <Arrow $color="#fff" />
                </ColorSwatch>
              </ToolButton>
              <ToolLine />
              <ToolButton>
                名称处理
                <Caret />
              </ToolButton>
            </Toolbar>

            <GridFrame>
              <Divider dir="right" />
              <GridColumn>
                <GridClip>
                  <QuotaGrid />
                </GridClip>
                <HTrack>
                  <ScrollButton aria-label="向左">
                    <Arrow $dir="left" />
                  </ScrollButton>
                  <Thumb $length={311} $flat>
                    <Grip $tall />
                  </Thumb>
                  <Spacer />
                  <ScrollButton aria-label="向右">
                    <Arrow $dir="right" />
                  </ScrollButton>
                </HTrack>
              </GridColumn>
              <VTrack $corner>
                <ScrollButton aria-label="向上">
                  <Arrow $dir="up" />
                </ScrollButton>
                <Thumb $length={13} $offset={80}>
                  <Grip />
                </Thumb>
                <Spacer />
                <ScrollButton aria-label="向下">
                  <Arrow />
                </ScrollButton>
              </VTrack>
            </GridFrame>

            <Divider row />

            <Lower>
              <TabRow $inset>
                {lowerTabs.map((t) => (
                  <Tab key={t} $active={t === lowerTab} onClick={() => setLowerTab(t)}>
                    {mixed(t)}
                  </Tab>
                ))}
                <Help />
              </TabRow>
              <LowerBody>
                <AiPanel>
                  <AiTools>
                    <SwitchButton>
                      <Switch type="checkbox" role="switch" />
                      聊天模式
                    </SwitchButton>
                    <PushButton $tall $pad={9}>
                      <span>{mixed('批量AI组价')}</span>
                    </PushButton>
                    <FieldLabel htmlFor="keyword" $width={59} $gap={7}>
                      特征关键
                    </FieldLabel>
                    <KeyInput id="keyword" placeholder="请输入内容" />
                    <PushButton $tall $pad={9}>
                      查找
                    </PushButton>
                    <FieldLabel as="span" $width={26} $gap={1} $wrap>
                      来
                      <br />
                      源:
                    </FieldLabel>
                    <SourcePicker aria-label="来源">
                      {['平', '财', '个', '群'].map((t) => (
                        <SourceTag key={t}>{t}</SourceTag>
                      ))}
                      <Chevron color="#b4bac4" />
                    </SourcePicker>
                    <FieldLabel htmlFor="sort" $width={54} $gap={1} $wrap>
                      按匹配度排序
                    </FieldLabel>
                    <Spacer />
                    <Switch id="sort" type="checkbox" role="switch" $large />
                  </AiTools>
                  <AiGrid>
                    <AiMatches />
                  </AiGrid>
                  <AiFooter>
                    <span>{mixed('共35条数据')}</span>
                    <Spacer $grow={3} />
                    <PushButton $tall $pad={16}>
                      <span>{mixed('AI查询条件')}</span>
                    </PushButton>
                    <FootCheck>
                      <CheckBox type="checkbox" $soft />
                      显示组价定额
                    </FootCheck>
                    <Spacer />
                    <label htmlFor="limit">最大显示数量:</label>
                    <Stepper>
                      <StepButton aria-label="减少" onClick={() => setLimit(limit - 1)}>−</StepButton>
                      <StepInput id="limit" value={limit} onChange={(e) => setLimit(Number(e.target.value) || 0)} />
                      <StepButton aria-label="增加" onClick={() => setLimit(limit + 1)}>+</StepButton>
                    </Stepper>
                  </AiFooter>
                </AiPanel>

                <Divider dir="left" />

                <FeaturePanel>
                  <ButtonGrid $first>
                    <GroupLabel>清单名称:</GroupLabel>
                    <PushButton $tall $pad={16}>加到名称</PushButton>
                    <PushButton $tall $pad={16}>全部清单</PushButton>
                    <PushButton $tall $pad={16}>从名称提取</PushButton>
                  </ButtonGrid>
                  <ButtonGrid>
                    <PushButton $tall $pad={16}>全部删除</PushButton>
                    <PushButton $tall $pad={16}>由子目生成</PushButton>
                    <PushButton $tall $pad={16}>全部生成</PushButton>
                  </ButtonGrid>
                  <FeatureTable />
                  <Note aria-label="特征备注" />
                </FeaturePanel>

                <Divider dir="right" />

                <NoteColumn>
                  <Note aria-label="特征描述" defaultValue={noteText} />
                </NoteColumn>
              </LowerBody>
            </Lower>
          </Main>
        </Body>

        <StatusBar>
          <Stat>通用安装工程</Stat>
          <StatLine />
          <Stat $end>一般计税法清单计价标准⋯</Stat>
          <Stat>安装工程</Stat>
          <StatLine />
          <Stat>招标控制价</Stat>
          <StatLine />
          <Stat>{mixed('项目总造价：3780863.39')}</Stat>
          <StatLine />
          <Stat>{mixed('单位工程造价：779887.62')}</Stat>
          <StatLine />
          <Stat $link>{mixed('清单 87')}</Stat>
          <StatLine />
          <Stat $link>{mixed('措施 1')}</Stat>
          <StatLine />
          <Progress role="progressbar" aria-valuenow={0} aria-label="进度">
            0%
          </Progress>
          <StatLine />
          网络<Online>在线</Online>
          <Spacer />
          <span>{mixed('版权所有 湖南智多星软件有限公司')}</span>
        </StatusBar>
      </Window>
    </Desktop>
  );
};

export default App;
